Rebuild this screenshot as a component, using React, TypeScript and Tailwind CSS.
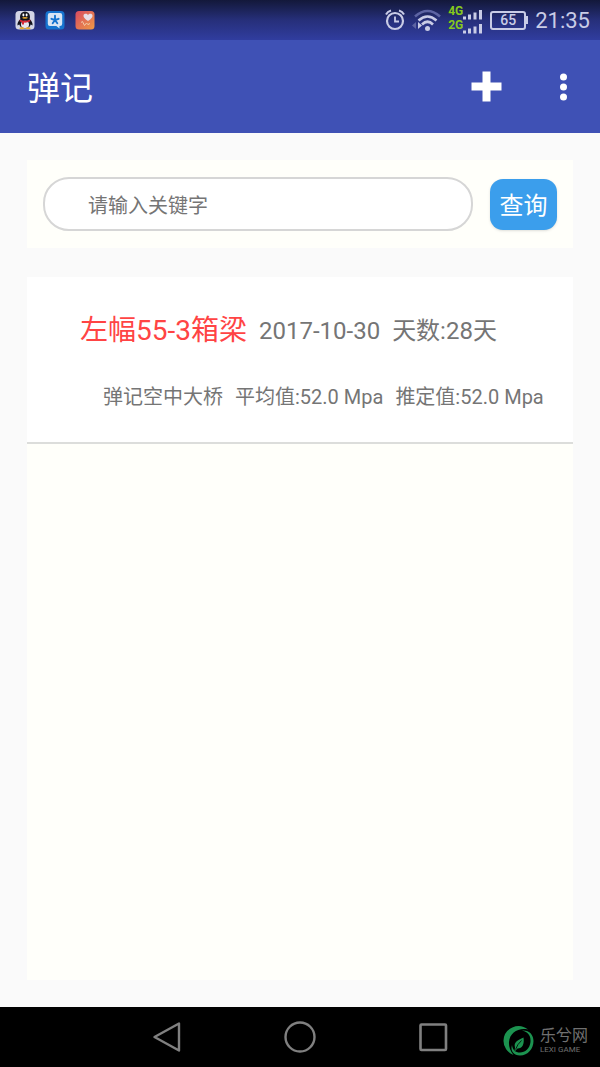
import React, { useState } from 'react';

interface TestRecord {
  id: string;
  part: string;
  date: string;
  age: string;
  project: string;
  average: string;
  estimate: string;
}

const RECORDS: TestRecord[] = [
  {
    id: '55-3',
    part: '左幅55-3箱梁',
    date: '2017-10-30',
    age: '天数:28天',
    project: '弹记空中大桥',
    average: '平均值:52.0 Mpa',
    estimate: '推定值:52.0 Mpa',
  },
];

function NotificationIcons() {
  return (
    <div className="flex gap-[10px]">
      {/* Penguin messenger */}
      <svg className="w-5 h-5" viewBox="0 0 20 20">
        <rect x="0.5" y="1" width="19" height="18.5" rx="3.5" fill="#d3d5e6" />
        <path d="M5.500 9Q2 12 2.500 15.500L5 14zM14.500 9Q18 12 17.500 15.500L15 14z" fill="#14141e" />
        <ellipse cx="10" cy="13" rx="6" ry="5.500" fill="#14141e" />
        <ellipse cx="10" cy="7" rx="5" ry="5.500" fill="#14141e" />
        <ellipse cx="10" cy="14.500" rx="4" ry="3.800" fill="#e6e6ee" />
        <ellipse cx="8.400" cy="5" rx="1" ry="1.400" fill="#fff" />
        <ellipse cx="11.600" cy="5" rx="1" ry="1.400" fill="#fff" />
        <ellipse cx="10" cy="7.800" rx="2.800" ry="0.900" fill="#e9a92c" />
        <path d="M4.800 9.500Q10 12 15.200 9.500L15.400 11.300Q11.500 13 9 12.600V14.500H7V12.200Q5.500 11.800 4.600 11.200Z" fill="#d62b38" />
        <ellipse cx="7" cy="18.300" rx="2.600" ry="1" fill="#e9a92c" />
        <ellipse cx="13" cy="18.300" rx="2.600" ry="1" fill="#e9a92c" />
      </svg>
      {/* Chat bubble with star */}
      <svg className="w-5 h-5" viewBox="0 0 20 20">
        <rect x="0.5" y="1" width="19" height="18.5" rx="3.5" fill="#1673cf" />
        <path d="M5 3h10a2.200 2.200 0 0 1 2.200 2.200v8.600a2.200 2.200 0 0 1-2.200 2.200h-.5v2.500l-3.200-2.500h-6.300a2.200 2.200 0 0 1-2.200-2.200v-8.600a2.200 2.200 0 0 1 2.200-2.200z" fill="#d8e4f5" />
        <path d="M10 5.800v4.200M10 10l-3.600-1.200M10 10l3.600-1.200M10 10l-2.300 3.200M10 10l2.300 3.200" stroke="#1673cf" strokeWidth="1.900" strokeLinecap="round" />
      </svg>
      {/* Heart and pulse */}
      <svg className="w-5 h-5" viewBox="0 0 20 20">
        <defs>
          <linearGradient id="pulse" x1="0" y1="0" x2="1" y2="1">
            <stop offset="0" stopColor="#d84a62" />
            <stop offset="1" stopColor="#ee9a45" />
          </linearGradient>
        </defs>
        <rect x="0.5" y="1" width="19" height="18.500" rx="3.500" fill="url(#pulse)" />
        <path d="M13 11C9.500 8.800 8.500 7.300 8.500 5.800C8.500 3.500 12 3.200 13 5.200C14 3.200 17.500 3.500 17.500 5.800C17.500 7.300 16.500 8.800 13 11Z" fill="#e8dfe8" />
        <path d="M6 12.500l1.500-1L9.500 15.500l2-2.500L13.500 15l1-2" fill="none" stroke="#f3c9a8" strokeWidth="1" />
      </svg>
    </div>
  );
}

function SignalRow({ network }: { network: string }) {
  return (
    <div className="h-[14px] flex items-end">
      <span className="self-start leading-[10px]">{network}</span>
      <svg className="w-5 h-[10px]" viewBox="0 0 20 10" fill="#c9cce6">
        <rect x="0" y="6.500" width="3" height="3" />
        <rect x="5" y="4.500" width="3" height="5" />
        <rect x="10.500" y="2.500" width="3" height="7" />
        <rect x="16" y="0" width="3" height="9.500" />
      </svg>
    </div>
  );
}

function StatusBar() {
  return (
    <div className="h-10 flex items-center justify-between pl-[15px] pr-[10px] bg-linear-to-b from-[#13183a] via-[#262f7a] to-[#303d9f] text-[#c9cce6]">
      <NotificationIcons />
      <div className="flex items-center gap-[7px]">
        <svg className="w-5 h-[22px]" viewBox="0 0 20 22" fill="none" stroke="currentColor">
          <circle cx="10" cy="12" r="8" strokeWidth="2.200" />
          <path d="M10 7.500V12.500H14" strokeWidth="1.800" />
          <path d="M1 5.500Q2.500 2.500 6 1.500M19 5.500Q17.500 2.500 14 1.500" strokeWidth="2" />
        </svg>
        <svg className="w-[29px] h-6" viewBox="0 0 29 24" fill="none">
          <path d="M3 8.500Q15.500-2.500 28 8.500" stroke="#5d64a3" strokeWidth="2.600" />
          <path d="M6.500 12.500Q15.500 4.500 24.500 12.500M10 16.500Q15.500 11 21 16.500" stroke="currentColor" strokeWidth="2.600" />
          <circle cx="15.500" cy="20.500" r="2.500" fill="currentColor" />
          <path d="M4 14v7L0 17.500z" fill="#5d64a3" />
          <path d="M6 14v7l4-3.500z" fill="currentColor" />
        </svg>
        <div className="flex flex-col text-[12px] font-bold text-[#86c91c]">
          <SignalRow network="4G" />
          <SignalRow network="2G" />
        </div>
        <div className="flex items-center">
          <div className="w-9 h-[19px] flex items-center justify-center rounded-[3px] border-2 border-current text-[14px] leading-[14px] font-medium">
            65
          </div>
          <div className="w-[2px] h-2 bg-current" />
        </div>
        <span className="text-[22px] leading-6 pt-[2px]">21:35</span>
      </div>
    </div>
  );
}

function Toolbar() {
  return (
    <header className="h-[93px] flex items-center justify-between px-[27px] bg-[#3f51b5] text-white">
      <h1 className="pt-1 text-[33px] leading-10">弹记</h1>
      <div className="flex items-center gap-[50px]">
        <button type="button" aria-label="新增">
          <svg className="w-8 h-8" viewBox="0 0 32 32" fill="currentColor">
            <path d="M11.500 0.500h8v11h11v8h-11v11h-8v-11h-11v-8h11z" />
          </svg>
        </button>
        <button type="button" aria-label="更多">
          <svg className="w-5 h-8" viewBox="0 0 20 32" fill="currentColor">
            <circle cx="10.500" cy="6" r="3.500" />
            <circle cx="10.500" cy="16" r="3.500" />
            <circle cx="10.500" cy="26" r="3.500" />
          </svg>
        </button>
      </div>
    </header>
  );
}

function RecordRow({ record }: { record: TestRecord }) {
  return (
    <li className="flex flex-col gap-8 pt-9 pb-[29px] bg-white border-b-2 border-[#dcdddb] text-[#757575] whitespace-nowrap">
      <div className="flex items-center gap-3 pl-[53px] text-[24px] leading-9">
        <span className="text-[28px] text-[#ff4444]">{record.part}</span>
        <span>{record.date}</span>
        <span>{record.age}</span>
      </div>
      <div className="flex items-center gap-3 pl-[76px] text-[20px] leading-8">
        <span>{record.project}</span>
        <span>{record.average}</span>
        <span>{record.estimate}</span>
      </div>
    </li>
  );
}

function NavigationBar() {
  return (
    <nav className="relative h-[60px] flex items-center justify-center gap-[101px] bg-black text-[#808080]">
      <button type="button" aria-label="返回">
        <svg className="w-8 h-8" viewBox="0 0 32 32" fill="none" stroke="currentColor" strokeWidth="2.400" strokeLinejoin="round">
          <path d="M28 2.500V29.500L3.500 16z" />
        </svg>
      </button>
      <button type="button" aria-label="主页">
        <svg className="w-8 h-8" viewBox="0 0 32 32" fill="none" stroke="currentColor" strokeWidth="2.400">
          <circle cx="16" cy="16" r="14.500" />
        </svg>
      </button>
      <button type="button" aria-label="最近任务">
        <svg className="w-8 h-8" viewBox="0 0 32 32" fill="none" stroke="currentColor" strokeWidth="2.600">
          <rect x="3.500" y="3.500" width="25.500" height="25.500" rx="1" />
        </svg>
      </button>

      {/* Site watermark */}
      <div className="absolute right-3 bottom-[11px] flex items-center gap-[6px]">
        <svg className="w-[31px] h-[31px]" viewBox="0 0 31 31" fill="#1c9350">
          {/* outer crescent */}
          <path d="M25 4.500A15 15 0 0 0 0.500 15.500A15 15 0 0 0 10.500 30Q5.500 24 6 17C6.800 8 15 2.500 25 4.500Z" />
          {/* swirl curling round the leaf */}
          <path d="M19 5.500C26 7 28 12 27.500 17C26.800 23.500 22 27.500 17 27.500C12.500 27.500 9.500 25 9 20C7 26 11 30.500 17 30.500C25 30.500 30.500 23.500 30.500 16C30.500 10 26.500 5 19 5.500Z" />
          <path d="M20.500 12.500C21.500 19 19.500 23.500 14.500 23.500L11.500 26.500L12 22.500C10.500 17 14.500 15.500 20.500 12.500Z" />
          <path d="M18.500 15.500Q14.500 19 12.500 24.500" fill="none" stroke="#000" strokeWidth="0.800" />
        </svg>
        <div className="flex flex-col text-[#707070]">
          <span className="text-[16px] leading-[18px]">乐兮网</span>
          <span className="text-[8px] leading-[10px]">LEXI GAME</span>
        </div>
      </div>
    </nav>
  );
}

export default function App() {
  const [keyword, setKeyword] = useState('');

  return (
    <div className="min-h-screen flex flex-col bg-[#fafafa] font-[Roboto,'Noto_Sans_CJK_SC',sans-serif]">
      <StatusBar />
      <Toolbar />

      <main className="flex-1 flex flex-col gap-[29px] p-[27px]">
        <form
          className="h-[88px] flex items-center gap-[17px] px-4 bg-[#fffffa]"
          onSubmit={(e) => e.preventDefault()}
        >
          <input
            type="text"
            aria-label="关键字"
            placeholder="请输入关键字"
            value={keyword}
            onChange={(e) => setKeyword(e.target.value)}
            className="flex-1 min-w-0 h-[54px] pt-1 px-[43px] rounded-[26px] border-2 border-[#d6d6d6] bg-white text-[20px] text-[#757575] placeholder:text-[#757575] outline-none"
          />
          <button
            type="submit"
            className="w-[67px] h-[51px] pt-1 rounded-[13px] bg-[#3b9eec] text-white text-[24px] leading-8 shadow-sm"
          >
            查询
          </button>
        </form>

        <ul className="flex-1 bg-[#fffffa]">
          {RECORDS.map((record) => (
            <RecordRow key={record.id} record={record} />
          ))}
        </ul>
      </main>

      <NavigationBar />
    </div>
  );
}
